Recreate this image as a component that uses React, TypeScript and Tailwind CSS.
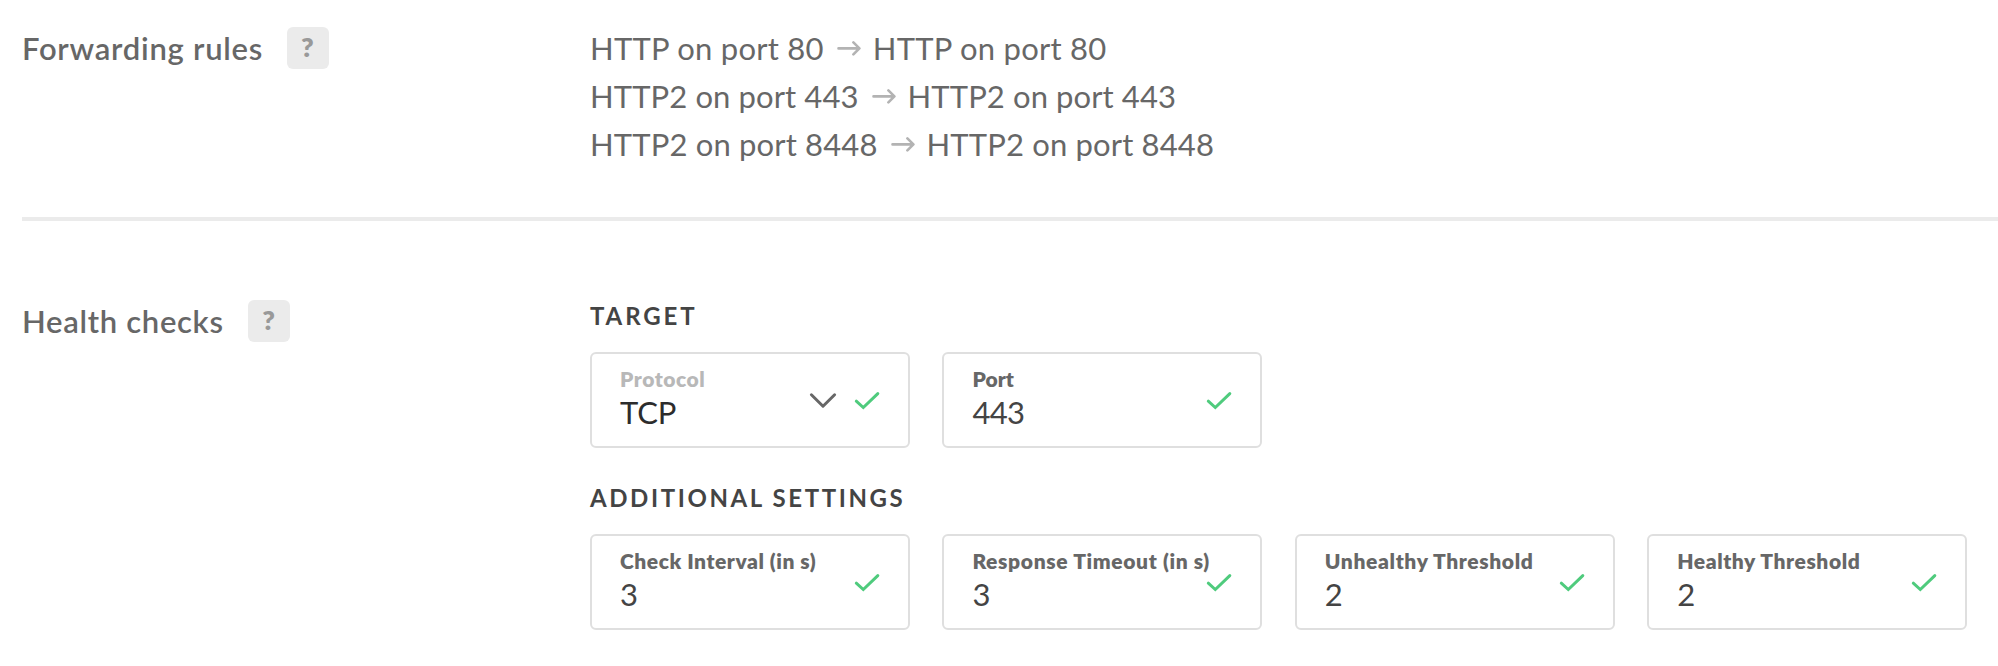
import type { ReactNode } from "react";

function Arrow() {
  return (
    <svg className="h-[20px] w-[24px] shrink-0" viewBox="0 0 24 20" fill="none" stroke="#b3b3b3" strokeWidth="2.6" strokeLinecap="round" strokeLinejoin="round">
      <path d="M1.5 10.4H22M16.4 4.4L22.4 10.4L16.4 16.4" />
    </svg>
  );
}

function Check() {
  return (
    <svg className="h-[20px] w-[26px] shrink-0" viewBox="0 0 26 20" fill="none" stroke="#4fcb7d" strokeWidth="3" strokeLinecap="round" strokeLinejoin="miter">
      <path d="M2.3 10.2L9.3 16.5L23.8 2.6" />
    </svg>
  );
}

function Chevron() {
  return (
    <svg className="h-[20px] w-[28px] shrink-0" viewBox="0 0 28 20" fill="none" stroke="#676767" strokeWidth="3" strokeLinecap="round" strokeLinejoin="round">
      <path d="M2.4 3.8L14 15.2L25.6 3.8" />
    </svg>
  );
}

function Help() {
  return (
    <span className="flex h-[42px] w-[42.5px] items-center justify-center rounded-md bg-[#ebebeb] pb-px text-[27px] font-extrabold text-[#999]">?</span>
  );
}

function SectionTitle({ children, className }: { children: ReactNode; className: string }) {
  return (
    <div className={`flex w-[568px] shrink-0 items-center ${className}`}>
      <h2 className="text-[31px] leading-[42px] font-semibold text-[#676767]">{children}</h2>
      <Help />
    </div>
  );
}

function Rule({ text, className }: { text: string; className: string }) {
  return (
    <li className={`flex h-12 items-center text-[31px] text-[#676767] ${className}`}>
      <span>{text}</span>
      <span className="mr-[12px] ml-[13px] flex">
        <Arrow />
      </span>
      <span>{text}</span>
    </li>
  );
}

interface FieldProps {
  label: string;
  value: string;
  spacing: string;
  valueSpacing?: string;
  labelColor?: string;
  valueColor?: string;
  select?: boolean;
}

function Field({ label, value, spacing, valueSpacing = "", labelColor = "text-[#676767]", valueColor = "text-[#444]", select }: FieldProps) {
  return (
    <div className="flex h-24 w-[320px] shrink-0 rounded-md border-2 border-[#dfdfdf] pr-[28px] pl-[28px]">
      <div className="w-0 grow pt-[12px] whitespace-nowrap">
        <div className={`text-[21px] leading-[26px] font-extrabold ${labelColor} ${spacing}`}>{label}</div>
        <div className={`text-[31px] leading-[40px] ${valueColor} ${valueSpacing}`}>{value}</div>
      </div>
      <div className="flex gap-[17px] pt-[37px]">
        {select && <Chevron />}
        <Check />
      </div>
    </div>
  );
}

export default function App() {
  return (
    <main className="h-[666px] w-[1998px] overflow-hidden bg-white font-['Lato',sans-serif]">
      <section className="ml-[22px] flex h-[221px] border-b-4 border-[#ebebeb] pt-[24px]">
        <SectionTitle className="h-[48px] gap-[23.5px] tracking-[0.75px]">Forwarding rules</SectionTitle>
        <ul>
          <Rule text="HTTP on port 80" className="tracking-[0.25px]" />
          <Rule text="HTTP2 on port 443" className="tracking-[0.1px]" />
          <Rule text="HTTP2 on port 8448" className="tracking-[0.15px]" />
        </ul>
      </section>
      <section className="ml-[22px] flex pt-[79px]">
        <SectionTitle className="h-[42px] gap-[24px] tracking-[0.7px]">Health checks</SectionTitle>
        <div>
          <h3 className="h-[52px] pt-px text-[24px] leading-[30px] font-bold tracking-[2.9px] text-[#444]">TARGET</h3>
          <div className="flex gap-[32.4px]">
            <Field label="Protocol" value="TCP" select labelColor="text-[#b8b8b8]" valueColor="text-[#2c2c2c]" spacing="tracking-[0.55px]" valueSpacing="tracking-[-0.1px]" />
            <Field label="Port" value="443" spacing="tracking-[0.07px]" valueSpacing="tracking-[-0.7px]" />
          </div>
          <h3 className="mt-[34px] h-[52px] pt-px text-[24px] leading-[30px] font-bold tracking-[2.6px] text-[#444]">ADDITIONAL SETTINGS</h3>
          <div className="flex gap-[32.4px]">
            <Field label="Check Interval (in s)" value="3" spacing="tracking-[0.55px]" />
            <Field label="Response Timeout (in s)" value="3" spacing="tracking-[0.65px]" />
            <Field label="Unhealthy Threshold" value="2" spacing="tracking-[0.65px]" />
            <Field label="Healthy Threshold" value="2" spacing="tracking-[0.6px]" />
          </div>
        </div>
      </section>
    </main>
  );
}
